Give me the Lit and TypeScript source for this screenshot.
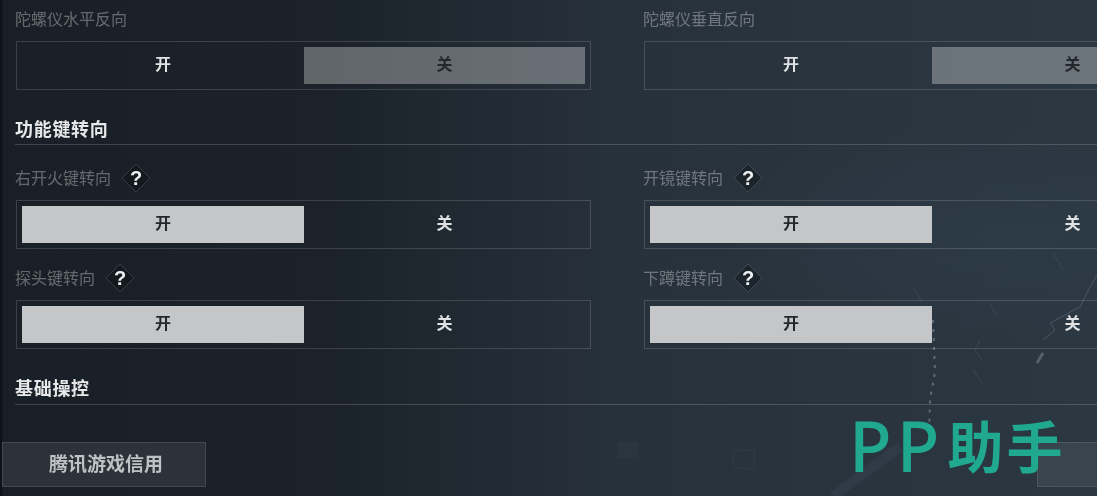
import { LitElement, html, css, svg } from "lit";
import { customElement } from "lit/decorators.js";

@customElement("app-root")
export class AppRoot extends LitElement {
  static styles = css`
    :host {
      display: block;
      width: 1097px;
      height: 496px;
      overflow: hidden;
      position: relative;
      font-family: "Noto Sans CJK SC", "Noto Sans", sans-serif;
      background:
        radial-gradient(ellipse 280px 110px at 1000px 235px, rgba(50, 70, 88, 0.3) 0%, rgba(50, 70, 88, 0) 100%),
        linear-gradient(90deg, #0f1318 0, #0f1318 2px, #191f26 3px, #1b2229 30%, #27313b 56%, #2b3741 100%);
    }
    .page {
      position: relative;
      display: flex;
      flex-direction: column;
      padding: 8px 0 0 16px;
      width: 1200px;
      box-sizing: border-box;
      filter: blur(0.35px);
    }
    .grid {
      display: grid;
      grid-template-columns: 575px 575px;
      column-gap: 53px;
    }
    .field { display: flex; flex-direction: column; }
    .label {
      display: flex;
      align-items: center;
      height: 22px;
      font-size: 16px;
      line-height: 22px;
      color: rgba(255, 255, 255, 0.33);
      margin-bottom: 11px;
      margin-left: -1px;
    }
    .label span { position: relative; top: -1.5px; }
    .grid.keys { row-gap: 14px; margin-top: 18px; }
    .grid.keys .label { height: 30px; margin-bottom: 7px; }
    .help { width: 30px; height: 30px; margin-left: 10px; flex: none; }
    .help text { font-family: "Liberation Sans", sans-serif; font-size: 20px; font-weight: 700; fill: #eceeef; }
    .toggle {
      display: grid;
      grid-template-columns: 282px 281px;
      height: 49px;
      box-sizing: border-box;
      padding: 5px;
      border: 1px solid rgba(255, 255, 255, 0.15);
    }
    .opt {
      display: flex;
      align-items: center;
      justify-content: center;
      font-size: 16px;
      line-height: 20px;
      padding-bottom: 5px;
      box-sizing: border-box;
      font-weight: 700;
      color: #dfe1e3;
    }
    .opt.on { background: #c4c6c8; color: #24282d; }
    .opt.off { background: rgba(255, 255, 255, 0.31); color: #24282d; }
    .section {
      margin: 28px 0 0 -1px;
      width: 1200px;
      height: 26px;
      font-size: 18px;
      line-height: 20px;
      letter-spacing: 0.7px;
      font-weight: 700;
      color: #e6e8ea;
      border-bottom: 1px solid rgba(255, 255, 255, 0.17);
    }
    .section.second { margin-top: 28px; height: 27px; }
    .credit {
      position: absolute;
      left: 2px;
      top: 442px;
      width: 204px;
      height: 45px;
      box-sizing: border-box;
      display: flex;
      align-items: center;
      justify-content: center;
      padding: 0 0 5px 4px;
      background: #2c3239;
      border: 1px solid #42494f;
      font-size: 19px;
      font-weight: 700;
      color: #bfc2c4;
      filter: blur(0.35px);
    }
    .corner {
      position: absolute;
      left: 1037px;
      top: 442px;
      width: 80px;
      height: 45px;
      box-sizing: border-box;
      background: rgba(255, 255, 255, 0.07);
      border: 1px solid #4f565c;
    }
    .logo {
      position: absolute;
      left: 849px;
      top: 399px;
      display: flex;
      align-items: center;
      height: 92px;
      color: #20a98f;
      white-space: nowrap;
    }
    .logo-pp {
      font-family: "Noto Sans", sans-serif;
      font-size: 70px;
      line-height: 92px;
      font-weight: 500;
      letter-spacing: 5px;
    }
    .logo-cn {
      position: relative;
      top: -1px;
      font-size: 56px;
      line-height: 92px;
      font-weight: 700;
      margin-left: 3px;
      letter-spacing: 3px;
    }
    .streaks { position: absolute; inset: 0; width: 1097px; height: 496px; pointer-events: none; }
  `;

  private help() {
    return html`<svg class="help" viewBox="0 0 30 30">
      <path d="M15 1 L29 15 L15 29 L1 15 Z" fill="rgba(10,14,18,0.4)" stroke="rgba(255,255,255,0.14)" stroke-width="1"></path>
      <text x="15" y="22" text-anchor="middle">?</text>
    </svg>`;
  }

  private field(label: string, on: boolean, help = false) {
    return html`<div class="field">
      <div class="label"><span>${label}</span>${help ? this.help() : ""}</div>
      <div class="toggle">
        <div class="opt ${on ? "on" : ""}">开</div>
        <div class="opt ${on ? "" : "off"}">关</div>
      </div>
    </div>`;
  }

  render() {
    return html`
      <svg class="streaks" viewBox="0 0 1097 496" fill="none">
        ${svg`<path d="M933 320 L935 372 L930 400 L929 432" stroke="#5f6b75" stroke-width="2" stroke-dasharray="3 6"></path>
        <path d="M913 288 L923 303 M990 303 L997 317 M1053 253 L1063 270 M973 370 L982 383" stroke="#35424d" stroke-width="1.5"></path>
        <path d="M1097 275 L1090 287 L1080 307 L1050 323 L1055 330 L1043 340" stroke="#4a5762" stroke-width="1"></path>
        <path d="M1043 353 L1037 363" stroke="#55626c" stroke-width="3"></path>
        <path d="M980 340 L975 350 L982 360" stroke="#3a4651" stroke-width="1"></path>
        <path d="M833 496 L900 447" stroke="#2f3b46" stroke-width="10"></path>
        <rect x="618" y="442" width="20" height="16" fill="#2a3540"></rect>
        <rect x="733.5" y="450.5" width="21" height="18" stroke="#2e3944" stroke-width="1"></rect>`}
      </svg>
      <div class="page">
        <div class="grid">
          ${this.field("陀螺仪水平反向", false)}
          ${this.field("陀螺仪垂直反向", false)}
        </div>
        <div class="section">功能键转向</div>
        <div class="grid keys">
          ${this.field("右开火键转向", true, true)}
          ${this.field("开镜键转向", true, true)}
          ${this.field("探头键转向", true, true)}
          ${this.field("下蹲键转向", true, true)}
        </div>
        <div class="section second">基础操控</div>
      </div>
      <div class="credit">腾讯游戏信用</div>
      <div class="corner"></div>
      <div class="logo"><span class="logo-pp">PP</span><span class="logo-cn">助手</span></div>
    `;
  }
}
